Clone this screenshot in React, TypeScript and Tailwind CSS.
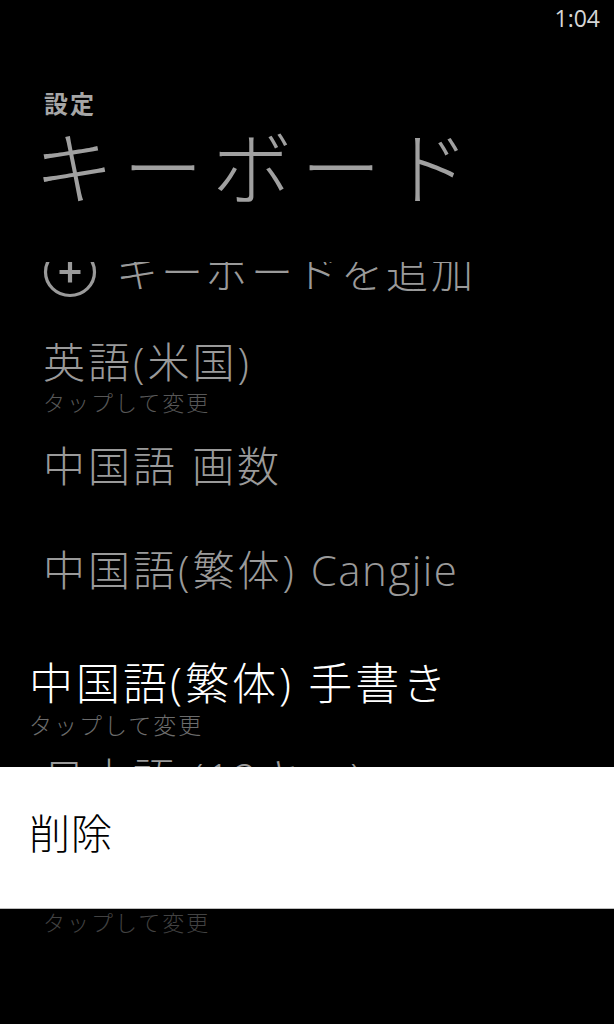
import React from "react";

const FONT = "font-['Open_Sans','Noto_Sans_CJK_JP',sans-serif]";

interface KeyboardItem {
  label: string;
  latin?: string;
  sub?: string;
}

const items: KeyboardItem[] = [
  { label: "英語(米国)", sub: "タップして変更" },
  { label: "中国語 画数" },
  { label: "中国語(繁体) ", latin: "Cangjie" },
  { label: "中国語(繁体) 手書き", sub: "タップして変更" },
  { label: "日本語 (12キー)", sub: "タップして変更" },
  { label: "日本語 (QWERTY)", sub: "タップして変更" },
];

// index of the item that is lifted while the context menu is open
const ACTIVE = 3;

function AddIcon() {
  return (
    <svg width="54" height="52" viewBox="0 0 54 52" fill="none" stroke="#9a9a9a">
      <ellipse cx="27" cy="26" rx="24.5" ry="23.5" strokeWidth="3.2" />
      <path d="M27 15.5v21M16.5 26h21" strokeWidth="4.2" />
    </svg>
  );
}

export default function App() {
  return (
    <div className={`relative w-[614px] h-[1024px] bg-black overflow-hidden ${FONT}`}>
      {/* status bar */}
      <div className="flex justify-end h-[40px] pt-[7px] pr-[14px] text-[23px] leading-[23px] text-[#d6d6d6]">
        1:04
      </div>

      {/* page header */}
      <div className="pl-[44px] pt-[52px]">
        <div className="text-[24px] leading-[24px] font-bold tracking-[2px] text-[#a6a6a6]">設定</div>
        <div className="mt-[10px] ml-[-10px] text-[80px] leading-[82px] tracking-[9px] font-light text-[#a0a0a0]">
          キーボード
        </div>
      </div>

      {/* list, clipped under the header */}
      <div className="mt-[54px] h-[762px] overflow-hidden">
        <div className="mt-[-11px] flex items-center h-[42px] pl-[43px] gap-[19px]">
          <AddIcon />
          <span className="text-[42px] leading-[42px] tracking-[3px] font-light text-[#9a9a9a]">キーボードを追加</span>
        </div>

        <div className="mt-[48px] flex flex-col">
          {items.map((item, idx) =>
            idx === ACTIVE ? (
              <div key={item.label} className="h-[104px] pl-[29px] pt-[8px]">
                <div className="text-[44px] leading-[44px] tracking-[3px] font-light text-white">{item.label}</div>
                <div className="mt-[8px] text-[23px] leading-[24px] tracking-[2px] font-light text-[#6c6c6c]">
                  {item.sub}
                </div>
              </div>
            ) : (
              <div key={item.label} className="h-[104px] pl-[43px]">
                <div className="text-[42px] leading-[42px] tracking-[3px] font-light text-[#9a9a9a]">
                  {item.label}
                  {item.latin && <span className="tracking-[1.5px]">{item.latin}</span>}
                </div>
                {item.sub && (
                  <div
                    className={`mt-[8px] text-[22px] leading-[23px] tracking-[2px] font-light ${
                      idx > ACTIVE ? "text-[#424242]" : "text-[#575757]"
                    }`}
                  >
                    {item.sub}
                  </div>
                )}
              </div>
            )
          )}
        </div>
      </div>

      {/* context menu */}
      <div className="absolute left-0 right-0 top-[767px] h-[142px] bg-white border-b border-[#bdbdbd] pl-[29px] pt-[46px]">
        <div className="text-[41px] leading-[41px] tracking-[1px] font-light text-black">削除</div>
      </div>
    </div>
  );
}
